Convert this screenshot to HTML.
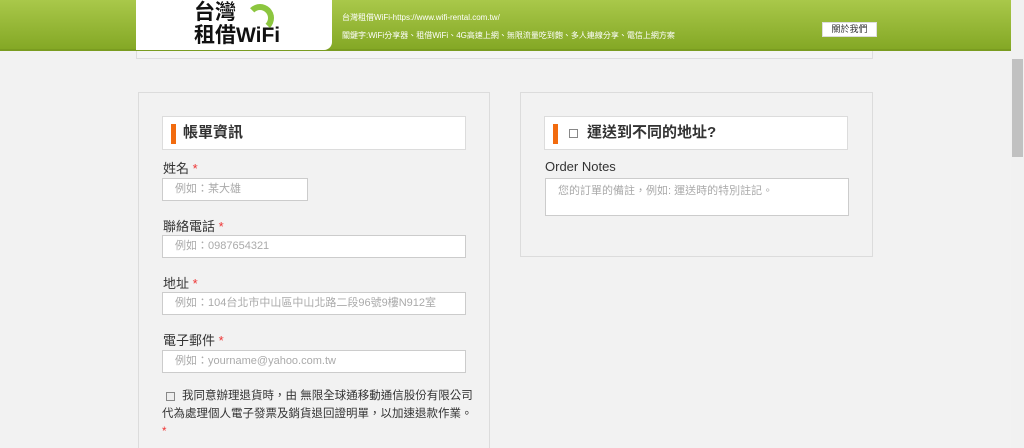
<!DOCTYPE html>
<html><head><meta charset="utf-8"><style>
*{box-sizing:border-box;margin:0;padding:0}
html,body{width:1024px;height:448px;overflow:hidden}
body{background:#f2f2f2;font-family:"Liberation Sans","Noto Sans CJK TC",sans-serif;position:relative}
.hdr{position:absolute;left:0;top:0;width:1011px;height:51px;background:linear-gradient(#a9c84a,#84a825);border-bottom:2px solid #7a9c20}
.logo{position:absolute;left:136px;top:0;width:196px;height:50px;background:#fff;border-radius:0 0 8px 0}
.sb{position:absolute;left:1011px;top:0;width:13px;height:448px;background:#f1f1f1}
.thumb{position:absolute;left:1012px;top:59px;width:11px;height:98px;background:#c1c1c1}
.panel{position:absolute;background:#f2f2f2;border:1px solid #dcdcdc}
.title{position:absolute;background:#fff;border:1px solid #dcdcdc;height:34px;font-size:15px;font-weight:bold;color:#333;line-height:32px;padding-left:20px}
.title:before{content:"";position:absolute;left:8px;top:7px;width:5px;height:20px;background:#f26b0f}
.lbl{position:absolute;font-size:13px;color:#333}
.lbl b{color:#e33;font-weight:normal}
.in{position:absolute;background:#fff;border:1px solid #ccc;height:23px;font-size:11px;color:#aaa;line-height:21px;padding-left:12px}
</style></head><body>
<div class="hdr"></div>
<div class="logo">
<div style="position:absolute;left:58px;top:1px;font-size:21px;font-weight:bold;line-height:23px;color:#111">台灣<br>租借<span style="font-family:'Liberation Sans'">WiFi</span></div>
<div style="position:absolute;left:110px;top:4px;width:28px;height:28px;border:6px solid #8cc63f;border-left-color:transparent;border-bottom-color:transparent;border-radius:50%"></div>
</div>
<div style="position:absolute;left:342px;top:12px;font-size:8px;color:#fff">台灣租借WiFi-https://www.wifi-rental.com.tw/</div>
<div style="position:absolute;left:342px;top:30px;font-size:8px;color:#fff">關鍵字:WiFi分享器、租借WiFi、4G高速上網、無限流量吃到飽、多人連線分享、電信上網方案</div>
<div style="position:absolute;left:822px;top:22px;width:55px;height:15px;background:#fff;border:1px solid #ddd;font-size:9px;text-align:center;line-height:13px;color:#333">關於我們</div>
<div style="position:absolute;left:136px;top:51px;width:737px;height:8px;border:1px solid #ddd;border-top:none;background:#f4f4f4"></div>
<div class="sb"></div><div class="thumb"></div>

<div class="panel" style="left:138px;top:92px;width:352px;height:370px"></div>
<div class="title" style="left:162px;top:116px;width:304px">帳單資訊</div>
<div class="lbl" style="left:163px;top:158px">姓名 <b>*</b></div>
<div class="in" style="left:162px;top:178px;width:146px">例如：某大雄</div>
<div class="lbl" style="left:163px;top:216px">聯絡電話 <b>*</b></div>
<div class="in" style="left:162px;top:235px;width:304px">例如：0987654321</div>
<div class="lbl" style="left:163px;top:273px">地址 <b>*</b></div>
<div class="in" style="left:162px;top:292px;width:304px">例如：104台北市中山區中山北路二段96號9樓N912室</div>
<div class="lbl" style="left:163px;top:330px">電子郵件 <b>*</b></div>
<div class="in" style="left:162px;top:350px;width:304px">例如：yourname@yahoo.com.tw</div>
<div style="position:absolute;left:166px;top:392px;width:9px;height:9px;border:1px solid #888;background:#eee"></div>
<div class="lbl" style="left:162px;top:387px;font-size:11.5px;line-height:18px;width:320px;text-indent:20px">我同意辦理退貨時，由 無限全球通移動通信股份有限公司<br>代為處理個人電子發票及銷貨退回證明單，以加速退款作業。<br><b style="color:#e33">*</b></div>

<div class="panel" style="left:520px;top:92px;width:353px;height:165px"></div>
<div class="title" style="left:544px;top:116px;width:304px;padding-left:42px">運送到不同的地址?</div>
<div style="position:absolute;left:569px;top:129px;width:9px;height:9px;border:1px solid #888;background:#fff"></div>
<div class="lbl" style="left:545px;top:159px">Order Notes</div>
<div class="in" style="left:545px;top:178px;width:304px;height:38px;padding-top:2px">您的訂單的備註，例如: 運送時的特別註記。</div>
</body></html>
